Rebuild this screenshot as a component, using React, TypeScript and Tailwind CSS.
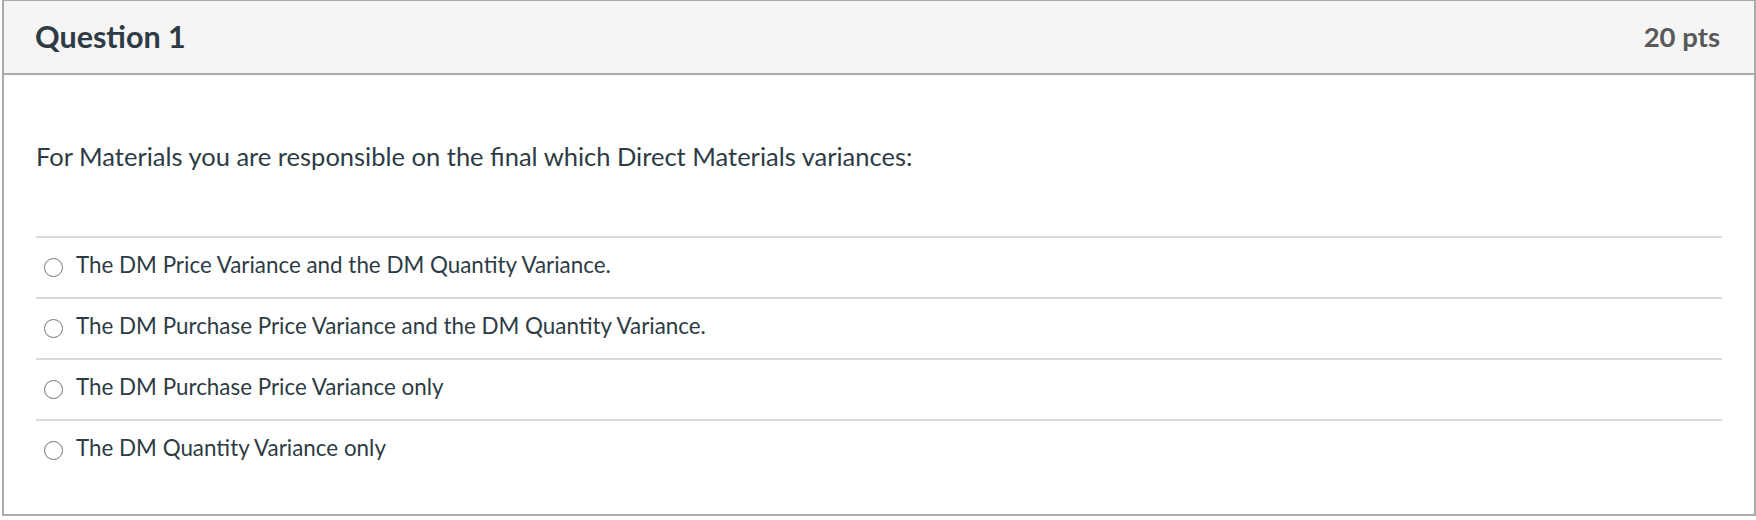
const options = [
    'The DM Price Variance and the DM Quantity Variance.',
    'The DM Purchase Price Variance and the DM Quantity Variance.',
    'The DM Purchase Price Variance only',
    'The DM Quantity Variance only',
];

const Radio = () => (
    <span className="inline-block h-[19px] w-[19px] shrink-0 rounded-full border-[1.5px] border-[#777777] bg-white" />
);

const App = () => {
    return (
        <div className="bg-white pl-[2px]" style={{ fontFamily: 'Lato, "Open Sans", sans-serif' }}>
            <div className="h-[516px] w-[1754px] border-2 border-t border-[#aaaaaa] bg-white">
                <div className="flex h-[74px] items-center justify-between border-b-2 border-[#aaaaaa] bg-[#f5f5f5] pl-[31px] pr-[34px]">
                    <h2 className="text-[30.5px] font-bold text-[#2d3b45]">Question 1</h2>
                    <span className="text-[27.5px] font-bold text-[#595959]">20 pts</span>
                </div>
                <div className="px-8 text-[#2d3b45]">
                    <p className="pt-[65px] pb-[63px] text-[25.5px] leading-[33px]">
                        For Materials you are responsible on the final which Direct Materials variances:
                    </p>
                    <div>
                        {options.map((opt) => (
                            <label
                                key={opt}
                                className="flex h-[61px] items-center border-t-2 border-[#dadada] pl-[8px]"
                            >
                                <Radio />
                                <span className="ml-[13px] pb-[5px] text-[22.4px]">{opt}</span>
                            </label>
                        ))}
                    </div>
                </div>
            </div>
        </div>
    );
};

export default App;
